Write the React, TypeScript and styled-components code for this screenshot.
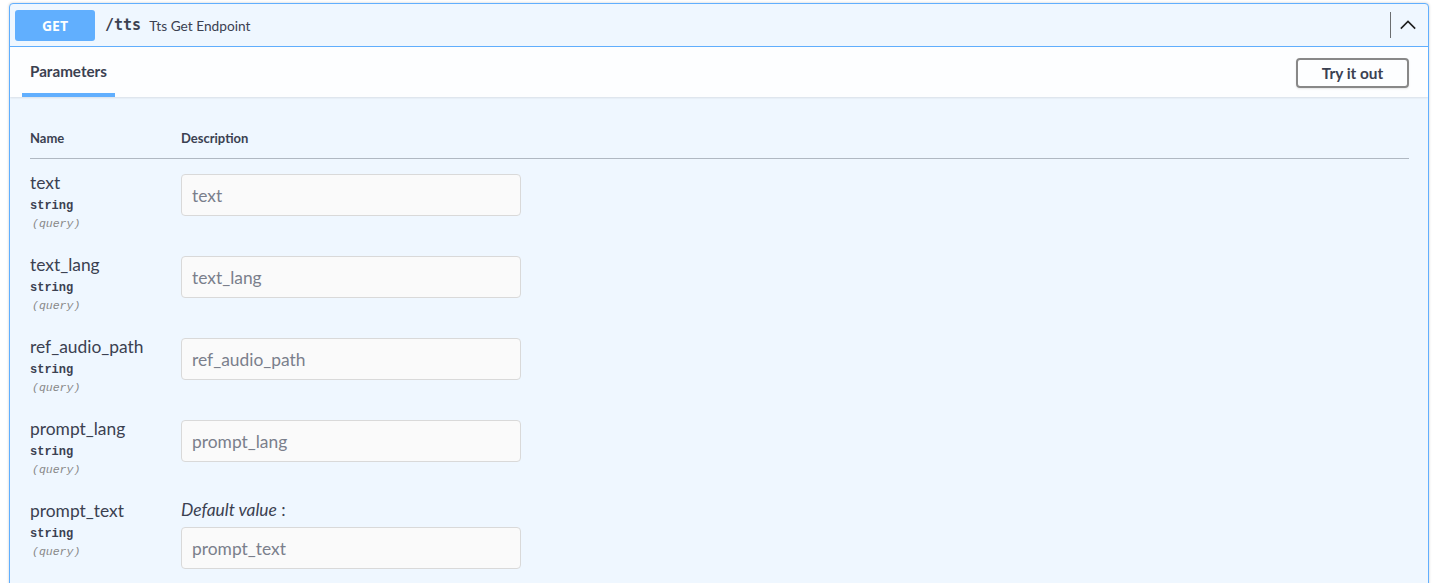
import React from "react";
import styled, { createGlobalStyle } from "styled-components";

const Global = createGlobalStyle`
  html, body { margin: 0; padding: 0; background: #fff; }
  body { font-family: "Lato", "Open Sans", sans-serif; color: #3b4151; }
  * { box-sizing: border-box; }
`;

const Page = styled.div`
  padding: 3px 4px 0 9px;
`;

const Block = styled.div`
  border: 1px solid #61affe;
  border-radius: 4px;
  background: #eff7ff;
  box-shadow: 0 0 3px rgba(0, 0, 0, 0.19);
  height: 590px;
  overflow: hidden;
`;

const Summary = styled.div`
  display: flex;
  align-items: center;
  height: 43px;
  padding: 0 5px;
  border-bottom: 1px solid #61affe;
`;

const Method = styled.span`
  width: 80px;
  height: 31px;
  display: flex;
  align-items: center;
  justify-content: center;
  background: #61affe;
  border-radius: 3px;
  color: #fff;
  font-weight: 700;
  font-size: 14px;
  font-family: "Open Sans", sans-serif;
`;

const Path = styled.span`
  font-family: "DejaVu Sans Mono", monospace;
  font-size: 15px;
  font-weight: 600;
  padding: 0 8px 0 10px;
  color: #3b4151;
`;

const Desc = styled.span`
  font-size: 13.7px;
  color: #3b4151;
  flex: 1;
`;

const Divider = styled.span`
  width: 1px;
  height: 26px;
  background: #333;
  opacity: 0.7;
  margin-right: 8px;
`;

const Arrow = styled.svg`
  width: 18px;
  height: 18px;
  margin-right: 6px;
`;

const Tabs = styled.div`
  display: flex;
  align-items: stretch;
  justify-content: space-between;
  height: 50px;
  padding: 0 19px 0 12px;
  background: rgba(255, 255, 255, 0.85);
  box-shadow: 0 1px 2px rgba(0, 0, 0, 0.1);
`;

const Tab = styled.div`
  display: flex;
  align-items: center;
  padding: 0 8px;
  font-size: 15.2px;
  font-weight: 700;
  color: #3b4151;
  border-bottom: 4px solid #61affe;
  padding-top: 2px;
`;

const TryBtn = styled.button`
  align-self: center;
  width: 113px;
  height: 30px;
  border: 2px solid #888;
  border-radius: 4px;
  background: transparent;
  box-shadow: 0 1px 2px rgba(0, 0, 0, 0.1);
  font-family: "Lato", sans-serif;
  font-size: 15.4px;
  font-weight: 700;
  color: #3b4151;
  margin-top: 1px;
`;

const Table = styled.div`
  padding: 33px 19px 0 20px;
`;

const HeadRow = styled.div`
  display: grid;
  grid-template-columns: 151px 1fr;
  padding-bottom: 12px;
  border-bottom: 1px solid rgba(59, 65, 81, 0.35);
  font-size: 13px;
  font-weight: 700;
  color: #3b4151;
`;

const Row = styled.div`
  display: grid;
  grid-template-columns: 151px 1fr;
  height: 82px;
  padding-top: 15px;
`;

const NameCell = styled.div`
  display: flex;
  flex-direction: column;
`;

const PName = styled.div`
  font-size: 17.4px;
  line-height: 18px;
  color: #3b4151;
`;

const PType = styled.div`
  font-family: "Liberation Mono", "DejaVu Sans Mono", monospace;
  font-size: 12px;
  font-weight: 700;
  margin-top: 7px;
  line-height: 14px;
  color: #3b4151;
`;

const PIn = styled.div`
  font-family: "Liberation Mono", "DejaVu Sans Mono", monospace;
  font-size: 11.5px;
  font-style: italic;
  color: #888;
  line-height: 16px;
  margin-top: 3px;
  padding-left: 2px;
`;

const DescCell = styled.div`
  display: flex;
  flex-direction: column;
`;

const DefaultLabel = styled.div`
  font-size: 17.4px;
  line-height: 20px;
  margin-top: -2px;
  margin-bottom: 7px;
  color: #3b4151;
  i { font-style: italic; }
`;

const Input = styled.input`
  width: 340px;
  height: 42px;
  padding: 8px 10px;
  border: 1px solid #d9d9d9;
  border-radius: 4px;
  background: #fafafa;
  font-family: "Lato", sans-serif;
  font-size: 17.4px;
  color: #3b4151;
  outline: none;
  &::placeholder { color: #7a7f8c; }
`;

const params = ["text", "text_lang", "ref_audio_path", "prompt_lang", "prompt_text"];

export default function App() {
  return (
    <>
      <Global />
      <Page>
        <Block>
          <Summary>
            <Method>GET</Method>
            <Path>/tts</Path>
            <Desc>Tts Get Endpoint</Desc>
            <Divider />
            <Arrow viewBox="0 0 20 20">
              <path d="M2 14 L10 6 L18 14" fill="none" stroke="#222" strokeWidth="1.8" />
            </Arrow>
          </Summary>
          <Tabs>
            <Tab>Parameters</Tab>
            <TryBtn>Try it out</TryBtn>
          </Tabs>
          <Table>
            <HeadRow>
              <div>Name</div>
              <div>Description</div>
            </HeadRow>
            {params.map((p) => (
              <Row key={p}>
                <NameCell>
                  <PName>{p}</PName>
                  <PType>string</PType>
                  <PIn>(query)</PIn>
                </NameCell>
                <DescCell>
                  {p === "prompt_text" && (
                    <DefaultLabel>
                      <i>Default value</i> :
                    </DefaultLabel>
                  )}
                  <Input placeholder={p} />
                </DescCell>
              </Row>
            ))}
          </Table>
        </Block>
      </Page>
    </>
  );
}
